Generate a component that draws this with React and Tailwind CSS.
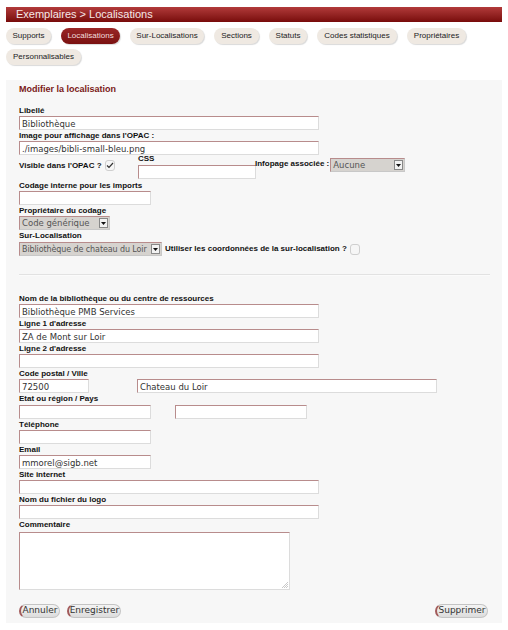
import React from "react";

const TABS = [
  { t: "Supports", w: "w-[45px]" },
  { t: "Localisations", w: "w-[59px]", on: true },
  { t: "Sur-Localisations", w: "w-[74px]" },
  { t: "Sections", w: "w-[45px]" },
  { t: "Statuts", w: "w-[38px]" },
  { t: "Codes statistiques", w: "w-[80px]" },
  { t: "Propriétaires", w: "w-[59px]" },
  { t: "Personnalisables", w: "w-[75px]" },
];

const Label = ({ children, className = "" }) => (
  <div className={`h-[10px] text-[8px] leading-[10px] font-bold text-[#111] whitespace-nowrap ${className}`}>{children}</div>
);

// champ texte façon PMB : bord haut/gauche rougeâtre
const Input = ({ w = "w-[300px]", value = "", className = "" }) => (
  <div className={`${w} h-[14px] bg-white border border-t-[#b88c8c] border-l-[#b88c8c] border-r-[#dcdcdc] border-b-[#dcdcdc] pl-[2px] pt-[1px] text-[8.5px] leading-[12px] text-[#333] font-['DejaVu_Sans'] whitespace-nowrap overflow-hidden ${className}`}>
    {value}
  </div>
);

const Select = ({ w, value, small }) => (
  <div className={`${w} h-[14px] flex bg-[#d6d3cf] border border-t-[#b88c8c] border-l-[#b88c8c] border-r-[#c8c8c8] border-b-[#c8c8c8]`}>
    <div className={`flex-1 pl-[2px] pt-[1px] ${small ? "text-[8px] tracking-[-0.1px]" : "text-[8.5px]"} leading-[11px] text-[#555] font-['DejaVu_Sans'] whitespace-nowrap overflow-hidden`}>{value}</div>
    <div className="w-[9px] h-[10px] mt-[1px] mr-[1px] bg-[#f2f2f2] border border-[#888] flex items-center justify-center">
      <svg width="5" height="3" viewBox="0 0 5 3"><path d="M0 0h5L2.5 3z" fill="#111" /></svg>
    </div>
  </div>
);

const Check = ({ on }) => (
  <div className="w-[10px] h-[11px] rounded-[3px] bg-[#f6f6f6] border border-[#cfcfcf] flex items-center justify-center">
    {on && (
      <svg width="8" height="7" viewBox="0 0 8 7"><path d="M1 3.5l2 2L7 1" stroke="#333" strokeWidth="1.2" fill="none" /></svg>
    )}
  </div>
);

const Btn = ({ w, children }) => (
  <div className={`${w} h-[14px] rounded-full bg-gradient-to-b from-[#f4f4f4] to-[#dcdcdc] border border-[#c4c4c4] border-l-[#a25a5a] border-l-2 flex items-center justify-center text-[9px] text-[#333] font-['DejaVu_Sans']`}>
    {children}
  </div>
);

const Field = ({ label, ...p }) => (
  <div className="flex flex-col">
    <Label>{label}</Label>
    <Input {...p} className="mb-[1px]" />
  </div>
);

export default function App() {
  return (
    <div className="w-[508px] h-[630px] bg-white font-['Liberation_Sans'] flex flex-col">
      <div className="mx-[6px] mt-[7px] h-[15px] bg-gradient-to-b from-[#b23a3a] to-[#780a0a] pl-[10px] text-[11px] leading-[15px] text-[#f6e8e8]">
        Exemplaires &gt; Localisations
      </div>

      <div className="mx-[6px] mt-[6px] flex flex-wrap gap-x-[10px] gap-y-[5px] w-[470px]">
        {TABS.map((tb) => (
          <div key={tb.t}
            className={`${tb.w} h-[16px] rounded-full flex items-center justify-center text-[8px] shadow-[1px_1px_1px_rgba(0,0,0,0.15)] ${tb.on ? "bg-gradient-to-b from-[#9a2626] to-[#7a1010] text-[#f3dede]" : "bg-[#efe9e2] text-[#222]"}`}>
            {tb.t}
          </div>
        ))}
      </div>

      <div className="mx-[6px] mt-[15px] h-[543px] bg-[#f7f7f7] pl-[13px] pt-[4px] flex flex-col">
        <div className="text-[9px] leading-[10px] font-bold text-[#7a1818]">Modifier la localisation</div>

        <div className="mt-[12px]" />
        <Field label="Libellé" value="Bibliothèque" />
        <Field label="Image pour affichage dans l'OPAC :" value="./images/bibli-small-bleu.png" />

        <div className="flex items-start h-[25px]">
          <div className="flex items-center gap-[3px] mt-[4px] w-[118px]">
            <Label>Visible dans l'OPAC ?</Label>
            <Check on />
          </div>
          <div className="flex flex-col -mt-[2px]">
            <Label className="pl-[1px]">CSS</Label>
            <Input w="w-[118px]" className="mt-[1px] ml-[1px]" />
          </div>
          <Label className="mt-[3px] -ml-[1px]">Infopage associée :</Label>
          <div className="ml-[1px] mt-[2px]"><Select w="w-[75px]" value="Aucune" /></div>
        </div>

        <Field label="Codage interne pour les imports" w="w-[132px]" />
        <Label>Propriétaire du codage</Label>
        <div className="mb-[1px]"><Select w="w-[91px]" value="Code générique" /></div>
        <Label>Sur-Localisation</Label>
        <div className="flex items-center gap-[3px] mt-[1px]">
          <Select w="w-[143px]" value="Bibliothèque de chateau du Loir" small />
          <Label>Utiliser les coordonnées de la sur-localisation ?</Label>
          <Check />
        </div>

        <div className="mt-[18px] w-[471px] h-[2px] border-t border-[#e2e2e2] bg-[#fbfbfb]" />

        <div className="mt-[18px]" />
        <Field label="Nom de la bibliothèque ou du centre de ressources" value="Bibliothèque PMB Services" />
        <Field label="Ligne 1 d'adresse" value="ZA de Mont sur Loir" />
        <Field label="Ligne 2 d'adresse" />
        <Label>Code postal / Ville</Label>
        <div className="flex mb-[1px]">
          <Input w="w-[70px]" value="72500" />
          <Input w="w-[300px]" value="Chateau du Loir" className="ml-[48px]" />
        </div>
        <Label>Etat ou région / Pays</Label>
        <div className="flex mb-[1px] mt-[1px]">
          <Input w="w-[132px]" />
          <Input w="w-[132px]" className="ml-[24px]" />
        </div>
        <Field label="Téléphone" w="w-[132px]" />
        <Field label="Email" w="w-[132px]" value="mmorel@sigb.net" />
        <Field label="Site internet" />
        <Field label="Nom du fichier du logo" />
        <Label>Commentaire</Label>
        <div className="relative w-[271px] h-[58px] mt-[2px] bg-white border border-t-[#b88c8c] border-l-[#b88c8c] border-r-[#dcdcdc] border-b-[#dcdcdc]">
          <svg className="absolute right-[1px] bottom-[1px]" width="6" height="6" viewBox="0 0 6 6">
            <path d="M6 0L0 6M6 2L2 6M6 4L4 6" stroke="#bbb" strokeWidth="0.8" />
          </svg>
        </div>

        <div className="flex mt-[14px] pr-[14px]">
          <Btn w="w-[41px]">Annuler</Btn>
          <div className="ml-[7px]"><Btn w="w-[54px]">Enregistrer</Btn></div>
          <div className="ml-auto"><Btn w="w-[53px]">Supprimer</Btn></div>
        </div>
      </div>
    </div>
  );
}
